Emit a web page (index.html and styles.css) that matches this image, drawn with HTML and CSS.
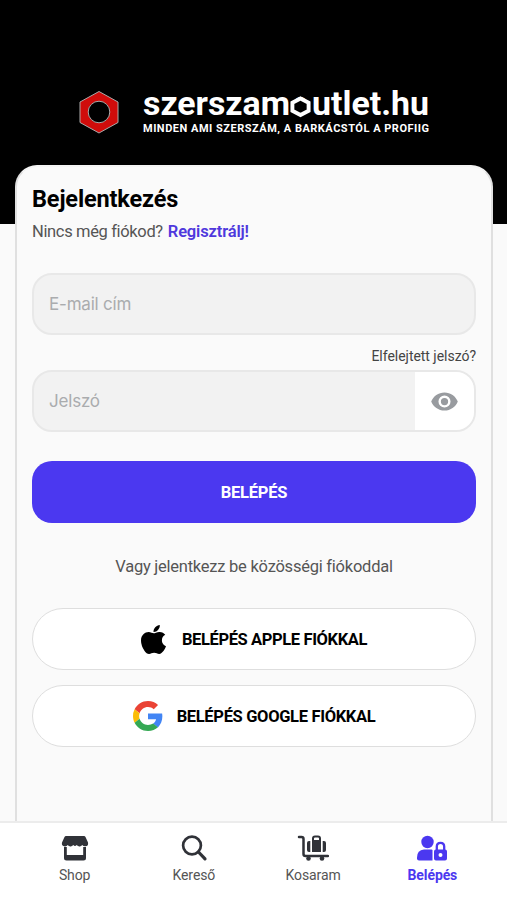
FILE: index.html
```html
<!DOCTYPE html>
<html lang="hu">
<head>
<meta charset="utf-8">
<meta name="viewport" content="width=device-width, initial-scale=1">
<title>Bejelentkezés</title>
<link rel="stylesheet" href="styles.css">
</head>
<body>
<div class="screen">
  <header class="hero">
    <svg class="brand" width="362" height="68" viewBox="78 76 362 68">
      <path d="M99 91.5 118 102v20.5L99 133 80 122.500V102Z" fill="#d00c0b" stroke="#aaa" stroke-width="1"/>
      <circle cx="99" cy="112" r="10.800" fill="#000" stroke="#aaa"/>
      <g class="wordmark">
        <text x="143" y="115" textLength="147" lengthAdjust="spacingAndGlyphs">szerszam</text>
        <text x="293" y="115" textLength="15" lengthAdjust="spacingAndGlyphs">o</text>
        <path d="m300.500 98.500 8.100 4.200v8.100l-8.100 4.200-8.100-4.200v-8.100Z" fill="#000" stroke="#fff" stroke-width="3.900"/>
        <text x="312" y="115" textLength="117" lengthAdjust="spacingAndGlyphs">utlet.hu</text>
      </g>
      <text class="slogan" x="143" y="132" textLength="286" lengthAdjust="spacing">MINDEN AMI SZERSZÁM, A BARKÁCSTÓL A PROFIIG</text>
    </svg>
  </header>
  <main class="card">
    <h1>Bejelentkezés</h1>
    <p class="signup"><span>Nincs még fiókod?</span><a>Regisztrálj!</a></p>
    <div class="field"><span class="placeholder">E-mail cím</span></div>
    <div class="forgot">Elfelejtett jelszó?</div>
    <div class="field"><span class="placeholder">Jelszó</span>
      <button class="reveal" aria-label="Jelszó"><svg width="29" height="29" viewBox="0 0 24 24"><path fill="#989b9f" d="M12 4.500C7 4.500 2.730 7.610 1 12c1.730 4.390 6 7.500 11 7.500s9.270-3.110 11-7.500c-1.730-4.390-6-7.500-11-7.500zM12 17a5 5 0 1 1 0-10 5 5 0 0 1 0 10zm0-8a3 3 0 1 0 0 6 3 3 0 0 0 0-6z"/></svg></button>
    </div>
    <button class="submit">BELÉPÉS</button>
    <p class="divider">Vagy jelentkezz be közösségi fiókoddal</p>
    <button class="social apple">
      <svg width="25" height="29" viewBox="4 32 376 448" preserveAspectRatio="none"><path d="M318.700 268.700c-.2-36.700 16.400-64.400 50-84.800-18.800-26.900-47.200-41.700-84.700-44.600-35.500-2.800-74.300 20.700-88.500 20.700-15 0-49.400-19.700-76.400-19.700C63.300 141.200 4 184.800 4 273.500q0 39.300 14.400 81.200c12.800 36.700 59 126.700 107.200 125.200 25.200-.6 43-17.900 75.800-17.900 31.800 0 48.300 17.900 76.400 17.900 48.600-.7 90.400-82.500 102.600-119.300-65.200-30.700-61.700-90-61.700-91.900zm-56.600-164.200c27.300-32.400 24.800-61.900 24-72.500-24.100 1.400-52 16.400-67.900 34.900-17.500 19.800-27.800 44.300-25.600 71.900 26.100 2 49.900-11.400 69.500-34.300z"/></svg>
      <span>BELÉPÉS APPLE FIÓKKAL</span>
    </button>
    <button class="social google">
      <svg width="30" height="30" viewBox="0 0 48 48"><path fill="#EA4335" d="M24 9.500c3.540 0 6.710 1.220 9.210 3.600l6.850-6.850C35.900 2.380 30.470 0 24 0 14.620 0 6.510 5.380 2.560 13.220l7.980 6.190C12.430 13.720 17.740 9.500 24 9.500z"/><path fill="#4285F4" d="M46.980 24.550c0-1.570-.15-3.090-.38-4.550H24v9.020h12.940c-.58 2.960-2.260 5.480-4.780 7.180l7.730 6c4.510-4.180 7.090-10.360 7.090-17.650z"/><path fill="#FBBC05" d="M10.530 28.590A14.500 14.500 0 0 1 9.770 24c0-1.600.27-3.140.76-4.590l-7.980-6.190A24 24 0 0 0 0 24c0 3.880.92 7.540 2.560 10.780z"/><path fill="#34A853" d="M24 48c6.480 0 11.930-2.130 15.890-5.810l-7.730-6c-2.150 1.450-4.920 2.300-8.160 2.300-6.260 0-11.570-4.220-13.470-9.910l-7.980 6.190C6.510 42.620 14.620 48 24 48z"/></svg>
      <span>BELÉPÉS GOOGLE FIÓKKAL</span>
    </button>
  </main>
  <nav class="tabs">
    <a class="tab shop"><svg width="32" height="28" viewBox="0 0 32 28"><path d="M7 2h18q1 0 1.500 1L29 8.500q.7 3.500-2.500 3.800-2 .3-3.200-1.300-1.600 2-3.700 1.200-1.100-.2-1.900-1.200-1.700 2-3.400 0-1.700 2-3.700 1.200-1.200-.2-1.900-1.200-1.400 2-3.700 1.200Q2.300 11.800 3 8.500L5.500 3Q6 2 7 2Z"/><path d="M5 13h2.800v8h16.400v-8H27v11q0 2.500-2.500 2.500h-17Q5 26.500 5 24Z"/></svg><span>Shop</span></a>
    <a class="tab search"><svg width="32" height="28" viewBox="0 0 32 28"><circle cx="14" cy="11.500" r="8.900" fill="none" stroke="currentColor" stroke-width="2.700"/><path d="m20.500 18 6.500 6.800" fill="none" stroke="currentColor" stroke-width="3.200" stroke-linecap="round"/></svg><span>Kereső</span></a>
    <a class="tab cart"><svg width="32" height="28" viewBox="0 0 32 28"><path d="M2 3h2.500q2 0 2 2v15q0 2 2 2H31" fill="none" stroke="currentColor" stroke-width="2.500" stroke-linecap="round"/><path d="M16 17V4.500q0-2 2-2h3q2 0 2 2V17" fill="none" stroke="currentColor" stroke-width="2"/><path d="M15 6h9v12h-9ZM13.300 7v11h-1.300q-2 0-2-2V9q0-2 2-2Zm12.400 0V18H27q2 0 2-2V9q0-2-2-2Z"/><circle cx="11.500" cy="24.500" r="2.300"/><circle cx="25" cy="24.500" r="2.300"/></svg><span>Kosaram</span></a>
    <a class="tab login"><svg width="32" height="28" viewBox="0 0 32 28"><circle cx="11.500" cy="8" r="6.200"/><path d="M8 15.500h7.500q1 0 1 1v10H3q-2 0-2-2v-1Q1 16 8 15.500Z"/><path d="M20.800 16v-3.500q0-3.700 3.700-3.700t3.700 3.700V16" fill="none" stroke="currentColor" stroke-width="2.300"/><path fill-rule="evenodd" d="M20 15.500h9q2 0 2 2v7q0 2-2 2h-9q-2 0-2-2v-7q0-2 2-2Zm4.500 3.500a2 2 0 1 0 0 4 2 2 0 0 0 0-4Z"/></svg><span>Belépés</span></a>
  </nav>
</div>
</body>
</html>
```
FILE: styles.css
```css
* { box-sizing: border-box; }
body { margin: 0; font-family: Roboto, "Noto Sans", sans-serif; background: #fafafa; }
button { font-family: inherit; padding: 0; margin: 0; }
h1, p { margin: 0; }
svg { fill: currentColor; flex: none; }
.screen { height: 900px; display: flex; flex-direction: column; overflow: hidden; }
.hero { height: 224px; flex: none; background: #000; padding: 76px 0 0 78px; }
.brand { display: block; }
.wordmark { font: 700 33px Roboto, sans-serif; fill: #fff; }
.slogan { font: 700 11px Roboto, sans-serif; fill: #fff; }
.card { flex: 1; min-height: 0; margin: -59px 14px 0 15px; padding: 18px 15px 0; border: 2px solid #e0e0e0; border-top-color: #f4f4f4; border-bottom: 0; border-radius: 22px 22px 0 0; background: #fafafa; display: flex; flex-direction: column; overflow: hidden; }
h1 { height: 28px; line-height: 28px; font-size: 23.500px; letter-spacing: -.15px; font-weight: 700; color: #000; white-space: nowrap; }
.signup { display: flex; gap: 5px; height: 24px; margin-top: 6px; line-height: 25px; font-size: 16.500px; letter-spacing: -.35px; color: #555; white-space: nowrap; }
.signup a { font-weight: 600; letter-spacing: -.15px; color: #4f38dd; }
.field { height: 62px; flex: none; margin-top: 30px; border: 2px solid #e8e8e8; border-radius: 20px; background: #f2f2f2; display: flex; align-items: center; overflow: hidden; }
.placeholder { flex: 1; padding-left: 15px; font: 17px Inter, sans-serif; letter-spacing: -.2px; color: #aaacae; }
.reveal { width: 59px; height: 100%; border: 0; background: #fff; display: flex; align-items: center; justify-content: center; }
.forgot { height: 20px; margin-top: 11px; line-height: 20px; font-size: 14px; letter-spacing: -.03px; text-align: right; color: #444; white-space: nowrap; }
.forgot + .field { margin-top: 4px; }
.submit { height: 62px; flex: none; margin-top: 29px; border: 0; border-radius: 20px; background: #4b38f0; color: #fff; font-size: 16.500px; letter-spacing: -.25px; font-weight: 700; }
.divider { height: 24px; margin-top: 31px; line-height: 26px; text-align: center; font-size: 16.500px; letter-spacing: -.24px; color: #555; white-space: nowrap; }
.social { height: 62px; flex: none; margin-top: 30px; border: 1.500px solid #dedede; border-radius: 31px; background: #fff; color: #000; display: flex; align-items: center; justify-content: center; gap: 16px; font-size: 16.500px; letter-spacing: -.38px; font-weight: 700; white-space: nowrap; }
.google { margin-top: 15px; gap: 14px; letter-spacing: -.33px; }
.tabs { height: 79px; flex: none; border-top: 2px solid #ececec; background: #fff; padding: 11px 15px 0; display: grid; grid-template-columns: repeat(4, 1fr); }
.tab { display: flex; flex-direction: column; align-items: center; color: #303238; }
.tab span { height: 22px; margin-top: 2px; line-height: 22px; font-size: 14px; letter-spacing: -.1px; color: #555; }
.tab.login, .login span { color: #4b38f0; }
.login span { font-weight: 700; }
```
